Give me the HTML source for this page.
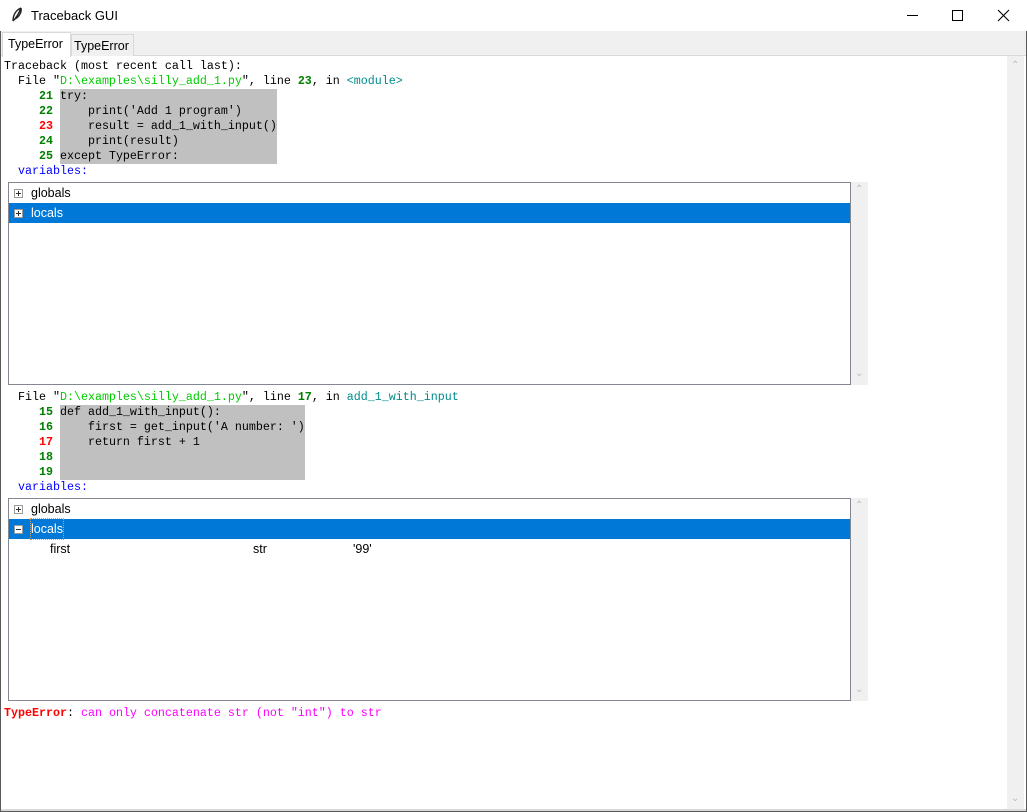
<!DOCTYPE html>
<html><head><style>
*{margin:0;padding:0;box-sizing:border-box}
body{width:1027px;height:812px;background:#fff;position:relative;overflow:hidden;font-family:"Liberation Sans",sans-serif}
.a{position:absolute}
.m{font-family:"Liberation Mono",monospace;font-size:11.67px;white-space:pre;line-height:15px;color:#000}
.g{color:#00cc00}.dg{color:#008000;font-weight:bold}.r{color:#ff0000;font-weight:bold}.c{color:#008b8b}.b{color:#0000ff}
.tree{position:absolute;left:8px;width:843px;height:203px;border:1px solid #828790;background:#fff;font-size:12.5px}
.row{position:absolute;left:0;width:841px;height:20px;line-height:20px}
.sel{background:#0078d7;color:#fff}
.box{position:absolute;left:5px;top:6px;width:9px;height:9px;border:1px solid #999;background:#fff}
.box:before{content:"";position:absolute;left:1px;top:3px;width:5px;height:1px;background:#333}
.plus:after{content:"";position:absolute;left:3px;top:1px;width:1px;height:5px;background:#333}
.lab{position:absolute;left:22px}
.sb{position:absolute;left:851px;width:17px;height:203px;background:#f0f0f0}
.ch{position:absolute;left:4px;color:#bbb;font-size:10px}
</style></head><body>
<div class="a" style="left:0;top:0;width:1027px;height:812px;border:1px solid #5a5a5a;border-top:none"></div>
<div class="a" style="left:0;top:0;width:1027px;height:31px;background:#fff"></div>
<svg class="a" style="left:10px;top:7px" width="14" height="16"><path d="M11 1C6 3 3 8 3 14M11 1C9 6 7 10 3 14M11 1C12 5 9 10 5 12" stroke="#222" stroke-width="1.4" fill="none"/></svg>
<div class="a" style="left:31px;top:8px;font-size:13px">Traceback GUI</div>
<div class="a" style="left:907px;top:15px;width:11px;height:1px;background:#000"></div>
<div class="a" style="left:952px;top:10px;width:11px;height:11px;border:1px solid #000"></div>
<svg class="a" style="left:997px;top:9px" width="13" height="13"><path d="M1 1L12 12M12 1L1 12" stroke="#000" stroke-width="1.1"/></svg>
<div class="a" style="left:1px;top:31px;width:1025px;height:25px;background:#f0f0f0;border-bottom:1px solid #d9d9d9"></div>
<div class="a" style="left:2px;top:32px;width:69px;height:25px;background:#fff;border:1px solid #d9d9d9;border-bottom:none;font-size:12.5px;padding:4px 0 0 5px">TypeError</div>
<div class="a" style="left:71px;top:34px;width:63px;height:22px;background:#f0f0f0;border:1px solid #d9d9d9;border-bottom:none;font-size:12.5px;padding:4px 0 0 2px">TypeError</div>
<div class="a" style="left:1007px;top:56px;width:17px;height:754px;background:#f0f0f0"><div class="ch" style="top:4px">&#8963;</div><div class="ch" style="top:737px">&#8964;</div></div>
<div class="a" style="left:1px;top:809px;width:1025px;height:2px;background:#d9d9d9"></div>

<div class="a" style="left:60px;top:89px;width:217px;height:75px;background:#c0c0c0"></div>
<div class="a" style="left:60px;top:405px;width:245px;height:75px;background:#c0c0c0"></div>

<div class="a m" style="left:4px;top:59px">Traceback (most recent call last):
  File "<span class="g">D:\examples\silly_add_1.py</span>", line <span class="dg">23</span>, in <span class="c">&lt;module&gt;</span>
     <span class="dg">21</span> try:
     <span class="dg">22</span>     print('Add 1 program')
     <span class="r">23</span>     result = add_1_with_input()
     <span class="dg">24</span>     print(result)
     <span class="dg">25</span> except TypeError:
  <span class="b">variables:</span></div>

<div class="tree" style="top:182px">
 <div class="row" style="top:0"><div class="box plus"></div><span class="lab">globals</span></div>
 <div class="row sel" style="top:20px"><div class="box plus"></div><span class="lab">locals</span></div>
</div>
<div class="sb" style="top:182px"><div class="ch" style="top:2px">&#8963;</div><div class="ch" style="top:186px">&#8964;</div></div>

<div class="a m" style="left:4px;top:390px">  File "<span class="g">D:\examples\silly_add_1.py</span>", line <span class="dg">17</span>, in <span class="c">add_1_with_input</span>
     <span class="dg">15</span> def add_1_with_input():
     <span class="dg">16</span>     first = get_input('A number: ')
     <span class="r">17</span>     return first + 1
     <span class="dg">18</span>
     <span class="dg">19</span>
  <span class="b">variables:</span></div>

<div class="tree" style="top:498px">
 <div class="row" style="top:0"><div class="box plus"></div><span class="lab">globals</span></div>
 <div class="row sel" style="top:20px"><div class="box"></div><span class="lab" style="outline:1px dotted #e0a050">locals</span></div>
 <div class="row" style="top:40px"><span style="position:absolute;left:41px">first</span><span style="position:absolute;left:244px">str</span><span style="position:absolute;left:344px">'99'</span></div>
</div>
<div class="sb" style="top:498px"><div class="ch" style="top:2px">&#8963;</div><div class="ch" style="top:186px">&#8964;</div></div>

<div class="a m" style="left:4px;top:706px"><span style="color:#ff0000;font-weight:bold">TypeError</span>: <span style="color:#ff00ff">can only concatenate str (not "int") to str</span></div>
</body></html>
